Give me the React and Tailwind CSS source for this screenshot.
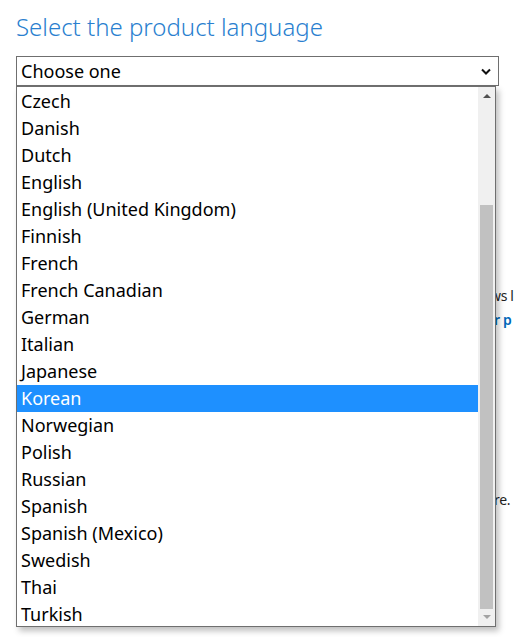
import React from "react";

const languages = [
  "Czech",
  "Danish",
  "Dutch",
  "English",
  "English (United Kingdom)",
  "Finnish",
  "French",
  "French Canadian",
  "German",
  "Italian",
  "Japanese",
  "Korean",
  "Norwegian",
  "Polish",
  "Russian",
  "Spanish",
  "Spanish (Mexico)",
  "Swedish",
  "Thai",
  "Turkish",
];

const font = { fontFamily: '"Noto Sans", "Open Sans", sans-serif' };

export default function App() {
  return (
    <div className="relative h-[637px] w-[515px] overflow-hidden bg-white" style={font}>
      <h2 className="pl-4 pt-[10px] text-[24px] font-light leading-[34px] text-[#2a7fcf]">
        Select the product language
      </h2>
      <div className="relative mx-4 mt-[12px]">
        <div className="flex h-[30px] items-center justify-between border border-[#6f6f6f] pl-[4px] pr-[7px] text-[18px] text-black">
          <span>Choose one</span>
          <svg width="10" height="7" viewBox="0 0 10 7">
            <path d="M1 1.5 L5 5.5 L9 1.5" fill="none" stroke="#111" strokeWidth="2" />
          </svg>
        </div>

        {/* page text underneath the open list */}
        <div className="text-[14px] leading-[24px] tracking-tight whitespace-nowrap">
          <div className="h-[198px]" />
          <div className="pl-[474px] text-[#222]">ws l</div>
          <div className="pl-[478px] font-semibold text-[#0067b8]">r p</div>
          <div className="h-[156px]" />
          <div className="pl-[478px] text-[#222]">re.</div>
        </div>

        <div className="absolute left-0 top-[30px] flex h-[541px] w-[480px] border border-[#6f6f6f] bg-white shadow-[3px_4px_6px_rgba(0,0,0,0.25)]">
          <ul className="flex-1 pt-px">
            {languages.map((lang) => (
              <li
                key={lang}
                className={`h-[27px] pl-[4px] text-[18px] leading-[26px] ${
                  lang === "Korean" ? "bg-[#1e90ff] text-white" : "text-black"
                }`}
              >
                {lang}
              </li>
            ))}
          </ul>
          <div className="flex w-[17px] flex-col bg-[#f0f0f0]">
            <div className="flex h-[17px] items-center justify-center">
              <svg width="8" height="5" viewBox="0 0 8 5">
                <path d="M0 5 L4 1 L8 5 Z" fill="#505050" />
              </svg>
            </div>
            <div className="flex-1 px-[2px] pt-[101px]">
              <div className="h-full bg-[#c1c1c1]" />
            </div>
            <div className="flex h-[17px] items-center justify-center">
              <svg width="8" height="5" viewBox="0 0 8 5">
                <path d="M0 0 L4 4 L8 0 Z" fill="#a3a3a3" />
              </svg>
            </div>
          </div>
        </div>
      </div>
    </div>
  );
}
